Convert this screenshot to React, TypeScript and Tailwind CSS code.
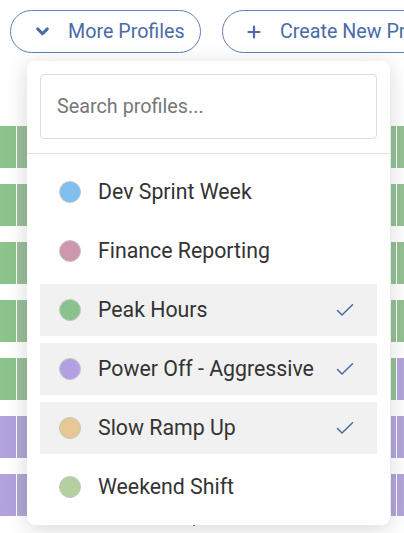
import React, { useState } from "react";

type Profile = { name: string; color: string; selected: boolean };

const profiles: Profile[] = [
  { name: "Dev Sprint Week", color: "bg-[#7fbff0]", selected: false },
  { name: "Finance Reporting", color: "bg-[#cf97ae]", selected: false },
  { name: "Peak Hours", color: "bg-[#88c28c]", selected: true },
  { name: "Power Off - Aggressive", color: "bg-[#b3a0e2]", selected: true },
  { name: "Slow Ramp Up", color: "bg-[#e7c893]", selected: true },
  { name: "Weekend Shift", color: "bg-[#b6cf9e]", selected: false },
];

// colours of the schedule rows behind the menu: [left, left2, right1, right2]
const rows: string[][] = [
  ["bg-[#8cc38c]", "bg-[#9bbf9b]", "bg-[#95c295]", "bg-[#95c295]"],
  ["bg-[#8cc38c]", "bg-[#9bbf9b]", "bg-[#95c295]", "bg-[#95c295]"],
  ["bg-[#8cc38c]", "bg-[#9bbf9b]", "bg-[#95c295]", "bg-[#95c295]"],
  ["bg-[#8cc38c]", "bg-[#9bbf9b]", "bg-[#95c295]", "bg-[#95c295]"],
  ["bg-[#8cc38c]", "bg-[#9bbf9b]", "bg-[#95c295]", "bg-[#b3a6da]"],
  ["bg-[#b2a2dd]", "bg-[#b1a8d6]", "bg-[#b3a6da]", "bg-[#b3a6da]"],
  ["bg-[#b2a2dd]", "bg-[#b1a8d6]", "bg-[#b3a6da]", "bg-[#b3a6da]"],
];

const App: React.FC = () => {
  const [query, setQuery] = useState<string>("");

  return (
    <div className="relative h-[533px] w-[404px] overflow-hidden bg-white font-['Roboto',sans-serif]">
      {/* toolbar */}
      <div className="flex gap-[21px] pl-[10px] pt-[10px] whitespace-nowrap">
        <button className="flex h-[43px] w-[191px] shrink-0 items-center rounded-full border border-[#5f80b8] pl-[24px] text-[19.7px] text-[#4a6aa8]">
          <svg width="15" height="15" viewBox="0 0 14 14" fill="none" stroke="currentColor" strokeWidth="2.8" strokeLinecap="round" strokeLinejoin="round">
            <path d="M2.5 4.6 7 9.1l4.5-4.5" />
          </svg>
          <span className="ml-[18px]">More Profiles</span>
        </button>
        <button className="flex h-[43px] shrink-0 items-center rounded-full border border-[#5f80b8] pl-[24px] pr-[24px] text-[19.7px] text-[#4a6aa8]">
          <svg width="14" height="14" viewBox="0 0 14 14" fill="none" stroke="currentColor" strokeWidth="2.2" strokeLinecap="round">
            <path d="M7 1.5v11M1.5 7h11" />
          </svg>
          <span className="ml-[19px]">Create New Profile</span>
        </button>
      </div>

      {/* schedule grid behind the menu */}
      <div className="mt-[73px] flex flex-col gap-[16px]">
        {rows.map((r, i) => (
          <div key={i} className="flex h-[42px] gap-px">
            <div className={`w-4 ${r[0]}`} />
            <div className={`w-[373px] ${r[1]}`} />
            <div className={`w-[5px] ${r[2]}`} />
            <div className={`flex-1 ${r[3]}`} />
          </div>
        ))}
      </div>
      <div className="absolute left-[193px] top-[524px] h-[2px] w-[2px] bg-[#6b85c0]" />

      {/* dropdown */}
      <div className="absolute left-[27px] top-[61px] w-[363px] rounded-[8px] bg-white shadow-[0_4px_22px_rgba(0,0,0,0.16)]">
        <div className="px-[13px] pt-[13px] pb-[14px]">
          <input
            value={query}
            onChange={(e) => setQuery(e.target.value)}
            placeholder="Search profiles..."
            className="h-[65px] w-full rounded-[4px] border border-[#dddddd] px-[16px] text-[19.8px] text-[#333] outline-none placeholder:text-[#777]"
          />
        </div>
        <div className="h-px bg-[#e2e2e2]" />
        <ul className="flex flex-col gap-[7px] px-[13px] pt-[12px] pb-[12px]">
          {profiles
            .filter((p) => p.name.toLowerCase().includes(query.toLowerCase()))
            .map((p) => (
              <li
                key={p.name}
                className={`flex h-[52px] items-center pl-[19px] pr-[23px] ${p.selected ? "bg-[#f1f1f1]" : ""}`}
              >
                <span className={`h-[22px] w-[22px] shrink-0 rounded-full border border-[#c4c4c4] ${p.color}`} />
                <span className="ml-[17px] flex-1 text-[21.3px] text-[#333333]">{p.name}</span>
                {p.selected && (
                  <svg width="18" height="14" viewBox="0 0 18 14" fill="none" stroke="#4a6aa8" strokeWidth="1.5" strokeLinecap="round" strokeLinejoin="round">
                    <path d="M1.5 7.5 6 12 16.5 1.8" />
                  </svg>
                )}
              </li>
            ))}
        </ul>
      </div>
    </div>
  );
};

export default App;
